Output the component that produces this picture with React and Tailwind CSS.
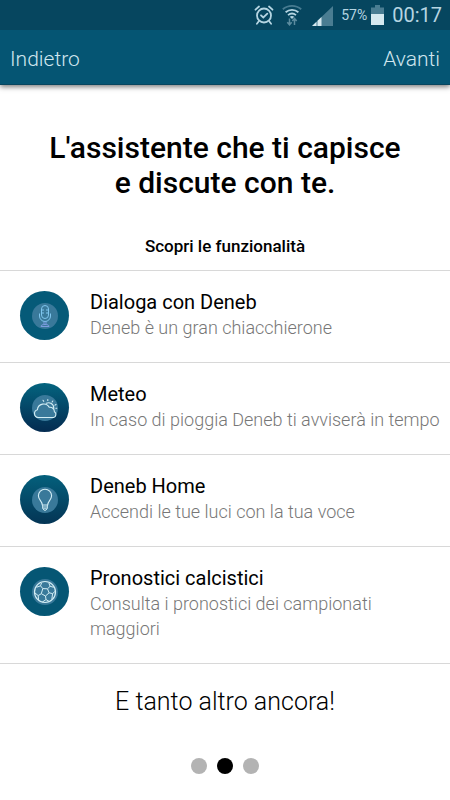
import React, { useState } from 'react';

const features = [
  { id: 'dialog', icon: MicIcon, title: 'Dialoga con Deneb', text: 'Deneb è un gran chiacchierone', bg: 'bg-[#055a78]' },
  { id: 'weather', icon: CloudIcon, title: 'Meteo', text: 'In caso di pioggia Deneb ti avviserà in tempo', bg: 'bg-linear-to-b from-[#04647f] to-[#042b50]' },
  { id: 'home', icon: BulbIcon, title: 'Deneb Home', text: 'Accendi le tue luci con la tua voce', bg: 'bg-linear-to-b from-[#04607c] to-[#043555]' },
  { id: 'football', icon: BallIcon, title: 'Pronostici calcistici', text: 'Consulta i pronostici dei campionati maggiori', bg: 'bg-[#055674]' },
];

function MicIcon() {
  return (
    <svg viewBox="0 0 26 26" className="size-[26px]" fill="none" stroke="#7fc6ee" strokeWidth="1">
      <rect x="9.5" y="2.5" width="7" height="13" rx="3.5" />
      <path d="M9.5 7h2.5M14 7h2.5M9.5 10h2.5M14 10h2.5" />
      <path d="M7.5 10.5v2.5a5.5 5.5 0 0 0 11 0v-2.5" />
      <path d="M12 18.5v3M14 18.5v3M9 23.5c0-1.5 1.5-2 4-2s4 .5 4 2z" stroke="#7c9ce0" />
    </svg>
  );
}

function CloudIcon() {
  return (
    <svg viewBox="0 0 26 26" className="size-[26px]" fill="none" stroke="#d3eef5" strokeWidth="1.1" strokeLinecap="round" strokeLinejoin="round">
      <path d="M6 22.5a4 4 0 0 1-.6-7.8 6.3 6.3 0 0 1 11.8-2.4 4.4 4.4 0 0 1 5.2 4.4 3.2 3.2 0 0 1-.8 5.8z" />
      <path d="M14.3 8.3c3.2-1.6 7.6.6 7.5 5.2M15.8 4.5v1M11 5.3l.7 1M20.8 6l-.7 1M24 9.5l-1 .6M24.7 13.3h-.8" />
    </svg>
  );
}

function BulbIcon() {
  return (
    <svg viewBox="0 0 26 26" className="size-[26px]" fill="none" stroke="#d3eef5" strokeWidth="1.1" strokeLinejoin="round">
      <path d="M10.3 18c0-3.8-3.9-5-3.9-9.2a6.6 6.6 0 0 1 13.2 0c0 4.2-3.9 5.4-3.9 9.2z" />
      <path d="M10.6 18v3.5l1.6 1.8h1.6l1.6-1.8V18M10.6 20h4.8M11 21.8h4" strokeWidth="0.9" />
    </svg>
  );
}

function BallIcon() {
  return (
    <svg viewBox="0 0 26 26" className="size-[26px]" fill="none" stroke="#d3eef5" strokeWidth="1" strokeLinejoin="round">
      <circle cx="13" cy="13" r="10.5" strokeWidth="1.2" />
      <path d="M10.8 9.6l4.7.2 1.6 4-3.6 3.2-4.2-2.3z" />
      <path d="M10.8 9.6 8.5 6.8l1.1-3M8.5 6.8 4.5 8.3M15.5 9.8l2.6-2.5-1.3-3.4M18.1 7.3l3.6 1M17.1 13.8l3.5.8 2.7-2.4M20.6 14.6l-.8 6M13.5 17l.5 3.6 3.2 1.8M14 20.6l-3.6 2.4M9.3 14.7l-3.1 1.9-3.4-2.8M6.2 16.6l.4 4.4" />
    </svg>
  );
}

function StatusBar() {
  return (
    <div className="flex h-[30px] items-center justify-end bg-[#06465f] pr-2 text-[#b5d5e2]">
      <svg viewBox="0 0 20 20" className="mr-2 size-5" fill="none" stroke="currentColor" strokeWidth="1.8" strokeLinecap="round">
        <circle cx="10" cy="10.5" r="7" />
        <path d="M7 10.3l2.3 2.2 4-3.8" />
        <path d="M1.5 4.7 5 1.5M18.5 4.7 15 1.5M4.8 16.3l-1.9 2.4M15.2 16.3l1.9 2.4" />
      </svg>
      <svg viewBox="0 0 20 22" className="mr-[10px] h-[22px] w-5" fill="none" stroke="currentColor" strokeWidth="1.8">
        <path d="M.8 5.2a14.2 14.2 0 0 1 18.4 0" stroke="#477b91" />
        <path d="M3.6 8.2a10 10 0 0 1 12.8 0M6 11.1a6.4 6.4 0 0 1 8 0" />
        <path d="M7.7 12.8a4 4 0 0 1 4.6 0L10 15z" fill="currentColor" stroke="none" />
        <path d="M7.5 14.5v6M5.3 18.2l2.2 2.6 2.2-2.6M12.5 21v-6M10.3 17l2.2-2.6 2.2 2.6" stroke="#5c8c9f" strokeWidth="1.5" />
      </svg>
      <svg viewBox="0 0 21 21" className="mr-2 size-[21px]">
        <path d="M0 21 21 1v20z" fill="#4a7d92" />
        <path d="M0 21 4.5 16.7V21zM5.5 21v-5.3L9.5 12v9z" fill="#d6e9ef" />
      </svg>
      <span className="mr-1 text-[14px]">57%</span>
      <svg viewBox="0 0 13 20" className="mr-2 h-5 w-[13px]">
        <path d="M0 2.5h4V0h5v2.5h4V9H0z" fill="#4a7d92" />
        <path d="M0 9h13v11H0z" fill="#d6e9ef" />
      </svg>
      <span className="text-[20px]">00:17</span>
    </div>
  );
}

export default function App() {
  const [page, setPage] = useState(1);

  return (
    <div className="min-h-screen bg-white font-['Roboto',sans-serif] text-black">
      <header className="shadow-[0_2px_5px_rgba(0,0,0,0.5)]">
        <StatusBar />
        <nav className="flex h-[55px] items-center justify-between border-b border-[#08465f] bg-[#055573] px-[10px] pt-[6px] text-[21px] font-light text-[#d0e6ee]">
          <button type="button" onClick={() => setPage(Math.max(page - 1, 0))}>Indietro</button>
          <button type="button" onClick={() => setPage(Math.min(page + 1, 2))}>Avanti</button>
        </nav>
      </header>

      <main>
        <h1 className="pt-[45px] text-center text-[30px] leading-[35px] font-medium">
          L'assistente che ti capisce<br />e discute con te.
        </h1>
        <h2 className="pt-[34px] pb-3 text-center text-[17px] leading-6 font-medium">Scopri le funzionalità</h2>

        <ul className="border-b border-[#d8d8d8]">
          {features.map(({ id, icon: Icon, title, text, bg }) => (
            <li key={id} className="flex items-start gap-[21px] border-t border-[#d8d8d8] pt-[18px] pr-[10px] pb-[22px] pl-5">
              <div className={`mt-0.5 flex size-[49px] shrink-0 items-center justify-center rounded-full ${bg}`}>
                <div className="flex size-[26px] items-center justify-center rounded-full bg-[#39799a]">
                  <Icon />
                </div>
              </div>
              <div>
                <h3 className="text-[20px] leading-[26px]">{title}</h3>
                <p className="text-[18px] leading-[25px] font-light text-[#777777]">{text}</p>
              </div>
            </li>
          ))}
        </ul>

        <p className="pt-[22px] text-center text-[25px] leading-8 font-light">E tanto altro ancora!</p>

        {/* Page dots */}
        <div className="flex justify-center gap-[10px] pt-10">
          {[0, 1, 2].map((n) => (
            <button
              key={n}
              type="button"
              aria-label={`Pagina ${n + 1}`}
              onClick={() => setPage(n)}
              className={`size-4 rounded-full ${n === page ? 'bg-black' : 'bg-[#b3b3b3]'}`}
            />
          ))}
        </div>
      </main>
    </div>
  );
}
